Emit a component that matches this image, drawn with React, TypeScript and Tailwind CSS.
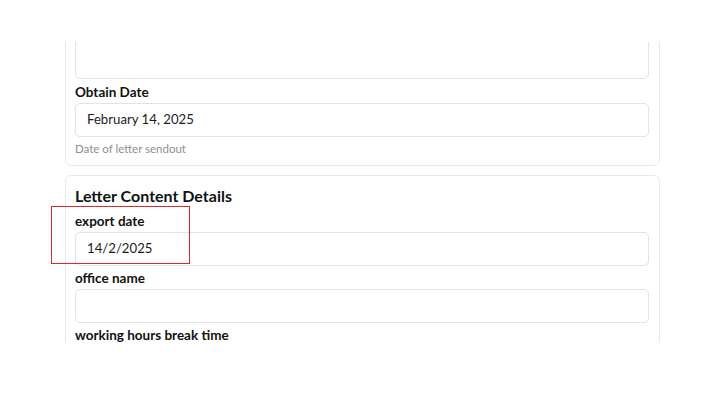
import React from "react";

function Label({ children, className = "" }: { children: React.ReactNode; className?: string }) {
  return (
    <div className={`text-[13.5px] leading-[20px] font-bold text-[#111] ${className}`}>{children}</div>
  );
}

function Field({ value, className = "" }: { value?: string; className?: string }) {
  return (
    <div
      className={`h-[34px] w-full rounded-[5px] border border-[#dfe2e7] bg-white pl-[11px] flex items-center text-[13.2px] text-[#1c1c1c] ${className}`}
    >
      {value}
    </div>
  );
}

export default function App() {
  return (
    <div
      className="relative w-[720px] h-[418px] bg-white overflow-hidden"
      style={{ fontFamily: 'Lato, "Noto Sans", sans-serif' }}
    >
      <div className="ml-[65px] mt-[42px] w-[595px] h-[300px] overflow-hidden">
        <div className="-mt-[68px] flex flex-col">
          <div className="rounded-[6px] border border-[#e6e8eb] pl-[9px] pr-[10px] pt-[7px] pb-[8px] flex flex-col">
            <Label>Notes</Label>
            <div className="mt-[1px] h-[76px] w-full rounded-[5px] border border-[#dfe2e7]" />
            <Label className="mt-[3px]">Obtain Date</Label>
            <Field className="mt-[1px]" value="February 14, 2025" />
            <div className="mt-[4px] text-[11.5px] leading-[16px] text-[#8a8f96]">Date of letter sendout</div>
          </div>
          <div className="mt-[9px] rounded-[6px] border border-[#e6e8eb] pl-[9px] pr-[10px] pt-[8px] pb-[8px] flex flex-col">
            <div className="text-[16px] leading-[24px] font-bold text-[#111]">Letter Content Details</div>
            <Label className="mt-[3px]">export date</Label>
            <Field className="mt-[1px]" value="14/2/2025" />
            <Label className="mt-[2px]">office name</Label>
            <Field className="mt-[1px]" />
            <Label className="mt-[2px]">working hours break time</Label>
            <Field className="mt-[1px]" />
          </div>
        </div>
      </div>
      <div className="absolute left-[51px] top-[206px] w-[139px] h-[58px] border border-[#d92b2b]" />
    </div>
  );
}
